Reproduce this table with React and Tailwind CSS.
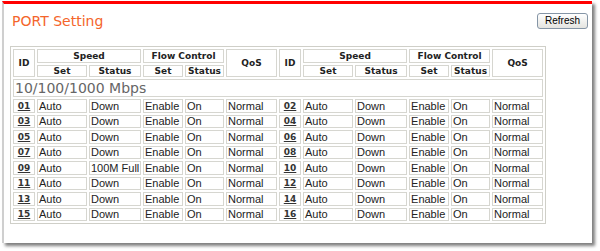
import React from "react";

const ports = Array.from({ length: 16 }, (_, i) => ({
  id: String(i + 1).padStart(2, "0"),
  set: "Auto",
  status: i + 1 === 9 ? "100M Full" : "Down",
  flowSet: "Enable",
  flowStatus: "On",
  qos: "Normal",
}));

const rows = [];
for (let i = 0; i < 16; i += 2) rows.push([ports[i], ports[i + 1]]);

const cell = "border border-[#d6d6d0] p-0 leading-none whitespace-nowrap";
const head =
  "border border-[#d6d6d0] p-0 text-center font-bold text-[9px] text-[#222] font-['DejaVu_Sans',sans-serif] leading-none";
const data = `${cell} text-[11px] text-[#222] font-['Liberation_Sans',Arial,sans-serif] pl-px`;

const PortCells = ({ p, h }) => (
  <>
    <td className={`${cell} ${h} text-center text-[9px] font-['DejaVu_Sans',sans-serif]`}>
      <a className="font-bold text-[#333] underline underline-offset-1">{p.id}</a>
    </td>
    <td className={`${data} ${h}`}>{p.set}</td>
    <td className={`${data} ${h}`}>{p.status}</td>
    <td className={`${data} ${h}`}>{p.flowSet}</td>
    <td className={`${data} ${h}`}>{p.flowStatus}</td>
    <td className={`${data} ${h}`}>{p.qos}</td>
  </>
);

const HeaderTop = () => (
  <>
    <th rowSpan={2} className={head}>ID</th>
    <th colSpan={2} className={`${head} h-[14px]`}>Speed</th>
    <th colSpan={2} className={head}>Flow Control</th>
    <th rowSpan={2} className={head}>QoS</th>
  </>
);

const HeaderSub = () => (
  <>
    <th className={`${head} h-[12px]`}>Set</th>
    <th className={head}>Status</th>
    <th className={head}>Set</th>
    <th className={head}>Status</th>
  </>
);

export default function App() {
  return (
    <div className="w-[600px] h-[251px] bg-white pt-px pl-[2px]">
      <div className="w-[590px] h-[242px] bg-white border-t-[3px] border-t-[#ff0000] border-l-2 border-l-[#cfcfcf] shadow-[3px_3px_3px_rgba(0,0,0,0.5)] pl-[6px] pr-[4px]">
        {/* Title bar */}
        <div className="flex justify-between items-start pt-[9px]">
          <h1 className="pl-[2px] text-[14px] leading-[17px] text-[#f4652b] font-['DejaVu_Sans',sans-serif]">
            PORT Setting
          </h1>
          <button className="w-[51px] h-[16px] rounded-[3px] border border-[#8595a6] bg-linear-to-b from-white to-[#e4e4e0] text-[10px] leading-none text-black font-['Liberation_Sans',Arial,sans-serif]">
            Refresh
          </button>
        </div>

        {/* Port table */}
        <table className="mt-[16px] w-[536px] table-fixed border-separate border-spacing-[2px] border border-[#cfcfc8]">
          <colgroup>
            {[0, 1].map((k) => (
              <React.Fragment key={k}>
                <col className="w-[22px]" />
                <col className="w-[50px]" />
                <col className="w-[52px]" />
                <col className="w-[40px]" />
                <col className="w-[39px]" />
                <col className="w-[51px]" />
              </React.Fragment>
            ))}
          </colgroup>
          <thead>
            <tr>
              <HeaderTop />
              <HeaderTop />
            </tr>
            <tr>
              <HeaderSub />
              <HeaderSub />
            </tr>
          </thead>
          <tbody>
            <tr>
              <td
                colSpan={12}
                className={`${cell} h-[18px] pl-px text-[14px] text-[#666] font-['DejaVu_Sans',sans-serif]`}
              >
                10/100/1000 Mbps
              </td>
            </tr>
            {rows.map(([a, b], i) => {
              const h = i % 2 === 0 ? "h-[14px]" : "h-[13px]";
              return (
                <tr key={a.id}>
                  <PortCells p={a} h={h} />
                  <PortCells p={b} h={h} />
                </tr>
              );
            })}
          </tbody>
        </table>
      </div>
    </div>
  );
}
